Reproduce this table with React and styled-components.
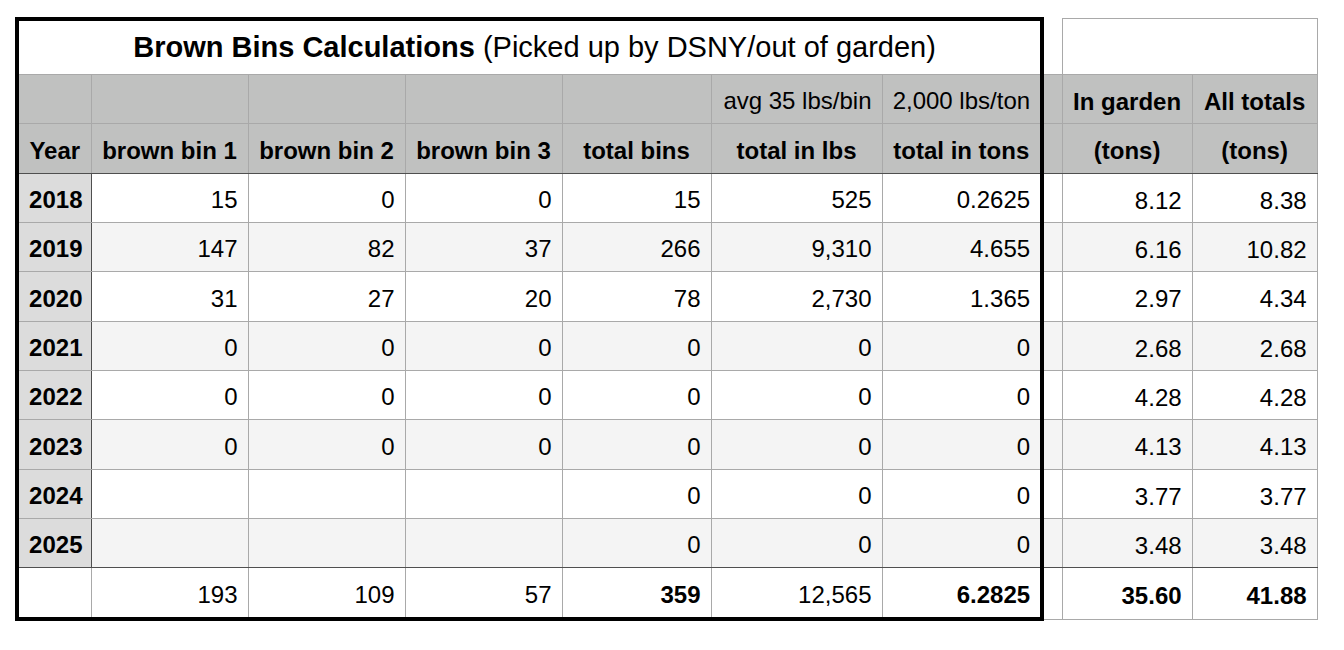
import styled, { createGlobalStyle } from "styled-components";

const GRID = "#a9a9a9";
const DARK = "#4f4f4f";
const HEAD = "#c0c1c0";
const YEAR = "#dcdcdc";
const ALT = "#f4f4f4";

const GlobalStyle = createGlobalStyle`
  body {
    margin: 0;
    background: #ffffff;
    color: #000000;
    font-family: "Liberation Sans", Arial, Helvetica, sans-serif;
  }
`;

const Sheet = styled("div")`
  display: flex;
  align-items: flex-start;
  padding: 17px 0 0 15px;
`;

const Frame = styled("div")`
  border: 4px solid #000;
`;

const Table = styled("table")`
  table-layout: fixed;
  border-collapse: collapse;
  border-spacing: 0;
  width: ${(p) => p.$width}px;
  ${(p) => p.$hidden && "border-style: hidden;"}
`;

const SideTable = styled(Table)`
  margin-top: 1px;
`;

const Row = styled("tr")`
  height: ${(p) => p.$h}px;
  background: ${(p) => p.$bg || "#fff"};
  & > td {
    ${(p) => p.$darkBottom && `border-bottom-color: ${DARK};`}
  }
`;

const Cell = styled("td")`
  border: 1px solid ${GRID};
  padding: 5px 10px 0;
  font-size: 24px;
  line-height: 1;
  white-space: nowrap;
  overflow: hidden;
  text-align: ${(p) => p.$align || "right"};
  font-weight: ${(p) => (p.$bold ? 700 : 400)};
`;

const YearCell = styled(Cell)`
  font-weight: 700;
  padding-right: 8px;
  background: ${(p) => (p.$plain ? "#fff" : YEAR)};
  ${(p) => p.$dark && `border-right-color: ${DARK};`}
`;

const TitleCell = styled("td")`
  text-align: center;
  font-size: 29px;
  padding: 0 0 0 10px;
  border-bottom: 1px solid ${GRID};
  white-space: nowrap;
  b {
    font-weight: 700;
  }
`;

const GapCell = styled("td")`
  border: 1px solid ${GRID};
  border-left: none;
  padding: 0;
  ${(p) => p.$open && "border-top: none;"}
`;

const BlankCell = styled("td")`
  border: 1px solid ${GRID};
`;

const leftCols = [72, 157, 157, 157, 149, 171, 158];
const rightCols = [18, 130, 125];

const rows = [
  ["2018", "15", "0", "0", "15", "525", "0.2625", "8.12", "8.38"],
  ["2019", "147", "82", "37", "266", "9,310", "4.655", "6.16", "10.82"],
  ["2020", "31", "27", "20", "78", "2,730", "1.365", "2.97", "4.34"],
  ["2021", "0", "0", "0", "0", "0", "0", "2.68", "2.68"],
  ["2022", "0", "0", "0", "0", "0", "0", "4.28", "4.28"],
  ["2023", "0", "0", "0", "0", "0", "0", "4.13", "4.13"],
  ["2024", "", "", "", "0", "0", "0", "3.77", "3.77"],
  ["2025", "", "", "", "0", "0", "0", "3.48", "3.48"],
];

const totals = ["", "193", "109", "57", "359", "12,565", "6.2825", "35.60", "41.88"];
const boldTotals = [4, 6, 7, 8];

const rowHeights = [49, 49, 50, 49, 49, 50, 49, 49];

function Cols({ widths }) {
  return (
    <colgroup>
      {widths.map((w, i) => (
        <col key={i} style={{ width: w }} />
      ))}
    </colgroup>
  );
}

function App() {
  return (
    <>
      <GlobalStyle />
      <Sheet>
        <Frame>
          <Table $width={1021} $hidden>
            <Cols widths={leftCols} />
            <tbody>
              <Row $h={53}>
                <TitleCell colSpan={7}>
                  <b>Brown Bins Calculations</b> (Picked up by DSNY/out of garden)
                </TitleCell>
              </Row>
              <Row $h={49} $bg={HEAD}>
                <Cell />
                <Cell />
                <Cell />
                <Cell />
                <Cell />
                <Cell>avg 35 lbs/bin</Cell>
                <Cell>2,000 lbs/ton</Cell>
              </Row>
              <Row $h={50} $bg={HEAD} $darkBottom>
                <Cell $align="center" $bold>Year</Cell>
                <Cell $align="center" $bold>brown bin 1</Cell>
                <Cell $align="center" $bold>brown bin 2</Cell>
                <Cell $align="center" $bold>brown bin 3</Cell>
                <Cell $align="center" $bold>total bins</Cell>
                <Cell $align="center" $bold>total in lbs</Cell>
                <Cell $align="center" $bold>total in tons</Cell>
              </Row>
              {rows.map((r, i) => (
                <Row
                  key={r[0]}
                  $h={rowHeights[i]}
                  $bg={i % 2 ? ALT : "#fff"}
                  $darkBottom={i === rows.length - 1}
                >
                  <YearCell $dark>{r[0]}</YearCell>
                  {r.slice(1, 7).map((v, j) => (
                    <Cell key={j}>{v}</Cell>
                  ))}
                </Row>
              ))}
              <Row $h={50}>
                <YearCell $plain />
                {totals.slice(1, 7).map((v, j) => (
                  <Cell key={j} $bold={boldTotals.includes(j + 1)}>
                    {v}
                  </Cell>
                ))}
              </Row>
            </tbody>
          </Table>
        </Frame>
        <SideTable $width={273}>
          <Cols widths={rightCols} />
          <tbody>
            <Row $h={56}>
              <GapCell $open />
              <BlankCell colSpan={2} />
            </Row>
            <Row $h={49} $bg={HEAD}>
              <GapCell />
              <Cell $align="center" $bold>In garden</Cell>
              <Cell $align="center" $bold>All totals</Cell>
            </Row>
            <Row $h={50} $bg={HEAD} $darkBottom>
              <GapCell />
              <Cell $align="center" $bold>(tons)</Cell>
              <Cell $align="center" $bold>(tons)</Cell>
            </Row>
            {rows.map((r, i) => (
              <Row
                key={r[0]}
                $h={rowHeights[i]}
                $bg={i % 2 ? ALT : "#fff"}
                $darkBottom={i === rows.length - 1}
              >
                <GapCell />
                <Cell>{r[7]}</Cell>
                <Cell>{r[8]}</Cell>
              </Row>
            ))}
            <Row $h={52}>
              <GapCell />
              <Cell $bold>{totals[7]}</Cell>
              <Cell $bold>{totals[8]}</Cell>
            </Row>
          </tbody>
        </SideTable>
      </Sheet>
    </>
  );
}

export default App;
